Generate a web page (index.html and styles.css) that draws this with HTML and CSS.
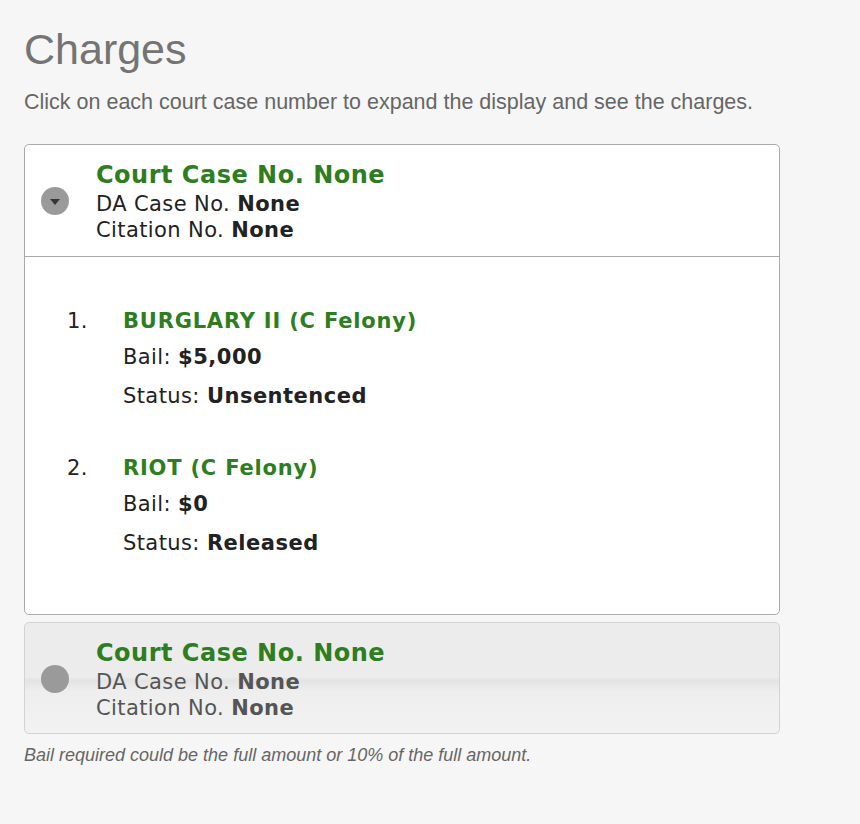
FILE: index.html
```html
<!DOCTYPE html>
<html>
<head>
<meta charset="utf-8">
<link rel="stylesheet" href="styles.css">
</head>
<body>
<div class="page">
  <h1 class="title">Charges</h1>
  <p class="intro">Click on each court case number to expand the display and see the charges.</p>

  <div class="case case-open">
    <div class="case-head">
      <span class="toggle"><svg width="28" height="28" viewBox="0 0 28 28"><circle cx="14" cy="14" r="14" fill="#9a9a9a"/><path d="M9 12 L19 12 L14 18 Z" fill="#353535"/></svg></span>
      <div class="case-info">
        <div class="case-no">Court Case No. None</div>
        <div class="case-line">DA Case No. <b>None</b></div>
        <div class="case-line">Citation No. <b>None</b></div>
      </div>
    </div>
    <div class="case-body">
      <ol class="charges">
        <li class="charge">
          <span class="charge-num">1.</span>
          <div class="charge-info">
            <div class="charge-name">BURGLARY II (C Felony)</div>
            <div class="charge-line">Bail: <b>$5,000</b></div>
            <div class="charge-line">Status: <b>Unsentenced</b></div>
          </div>
        </li>
        <li class="charge">
          <span class="charge-num">2.</span>
          <div class="charge-info">
            <div class="charge-name">RIOT (C Felony)</div>
            <div class="charge-line">Bail: <b>$0</b></div>
            <div class="charge-line">Status: <b>Released</b></div>
          </div>
        </li>
      </ol>
    </div>
  </div>

  <div class="case case-closed">
    <div class="case-head">
      <span class="toggle"><svg width="28" height="28" viewBox="0 0 28 28"><circle cx="14" cy="14" r="14" fill="#9a9a9a"/></svg></span>
      <div class="case-info">
        <div class="case-no">Court Case No. None</div>
        <div class="case-line">DA Case No. <b>None</b></div>
        <div class="case-line">Citation No. <b>None</b></div>
      </div>
    </div>
  </div>

  <p class="note">Bail required could be the full amount or 10% of the full amount.</p>
</div>
</body>
</html>
```

FILE: styles.css
```css
html, body {
  margin: 0;
  padding: 0;
  background: #f6f6f6;
}
.page {
  padding: 24px 24px 0 24px;
  width: 756px;
}
.title {
  margin: 0;
  font-family: "Liberation Sans", Arial, sans-serif;
  font-weight: normal;
  font-size: 43px;
  line-height: 50px;
  color: #747474;
}
.intro {
  margin: 15px 0 29px 0;
  font-family: "Liberation Sans", Arial, sans-serif;
  font-size: 21.5px;
  line-height: 26px;
  color: #666;
}
.case {
  border-radius: 5px;
  font-family: "DejaVu Sans", Verdana, sans-serif;
}
.case-open {
  border: 1px solid #aaa;
  background: #fff;
}
.case-closed {
  margin-top: 7px;
  border: 1px solid #d3d3d3;
  background: linear-gradient(to bottom, #ececec 0%, #ececec 49%, #e3e3e3 52%, #eeeeee 62%, #f2f2f2 100%);
}
.case-head {
  display: flex;
  align-items: center;
  padding: 14px 16px 13px 16px;
}
.case-closed .case-head {
  padding-bottom: 12px;
}
.case-open .case-head {
  border-bottom: 1px solid #aaa;
}
.toggle {
  width: 28px;
  height: 28px;
  margin-right: 27px;
  display: flex;
}
.case-no {
  font-size: 24px;
  font-weight: bold;
  line-height: 32px;
  letter-spacing: 0.5px;
  color: #2e7d1f;
}
.case-line {
  font-size: 21px;
  line-height: 26px;
  letter-spacing: 0.4px;
  color: #222;
}
.case-closed .case-line {
  color: #555;
}
.case-body {
  padding: 48px 0 51px 0;
}
.charges {
  list-style: none;
  margin: 0;
  padding: 0 0 0 42px;
}
.charge {
  display: flex;
  font-size: 21px;
  color: #222;
}
.charge + .charge {
  margin-top: 36px;
}
.charge-num {
  width: 56px;
  line-height: 33px;
  letter-spacing: 0.4px;
}
.charge-name {
  font-weight: bold;
  color: #2e7d1f;
  line-height: 33px;
  letter-spacing: 0.8px;
}
.charge-line {
  line-height: 39px;
  letter-spacing: 0.4px;
}
.charge-line b {
  letter-spacing: 0.5px;
}
.note {
  margin: 10px 0 0 0;
  font-family: "Liberation Sans", Arial, sans-serif;
  font-style: italic;
  font-size: 18px;
  line-height: 22px;
  color: #666;
}
```
